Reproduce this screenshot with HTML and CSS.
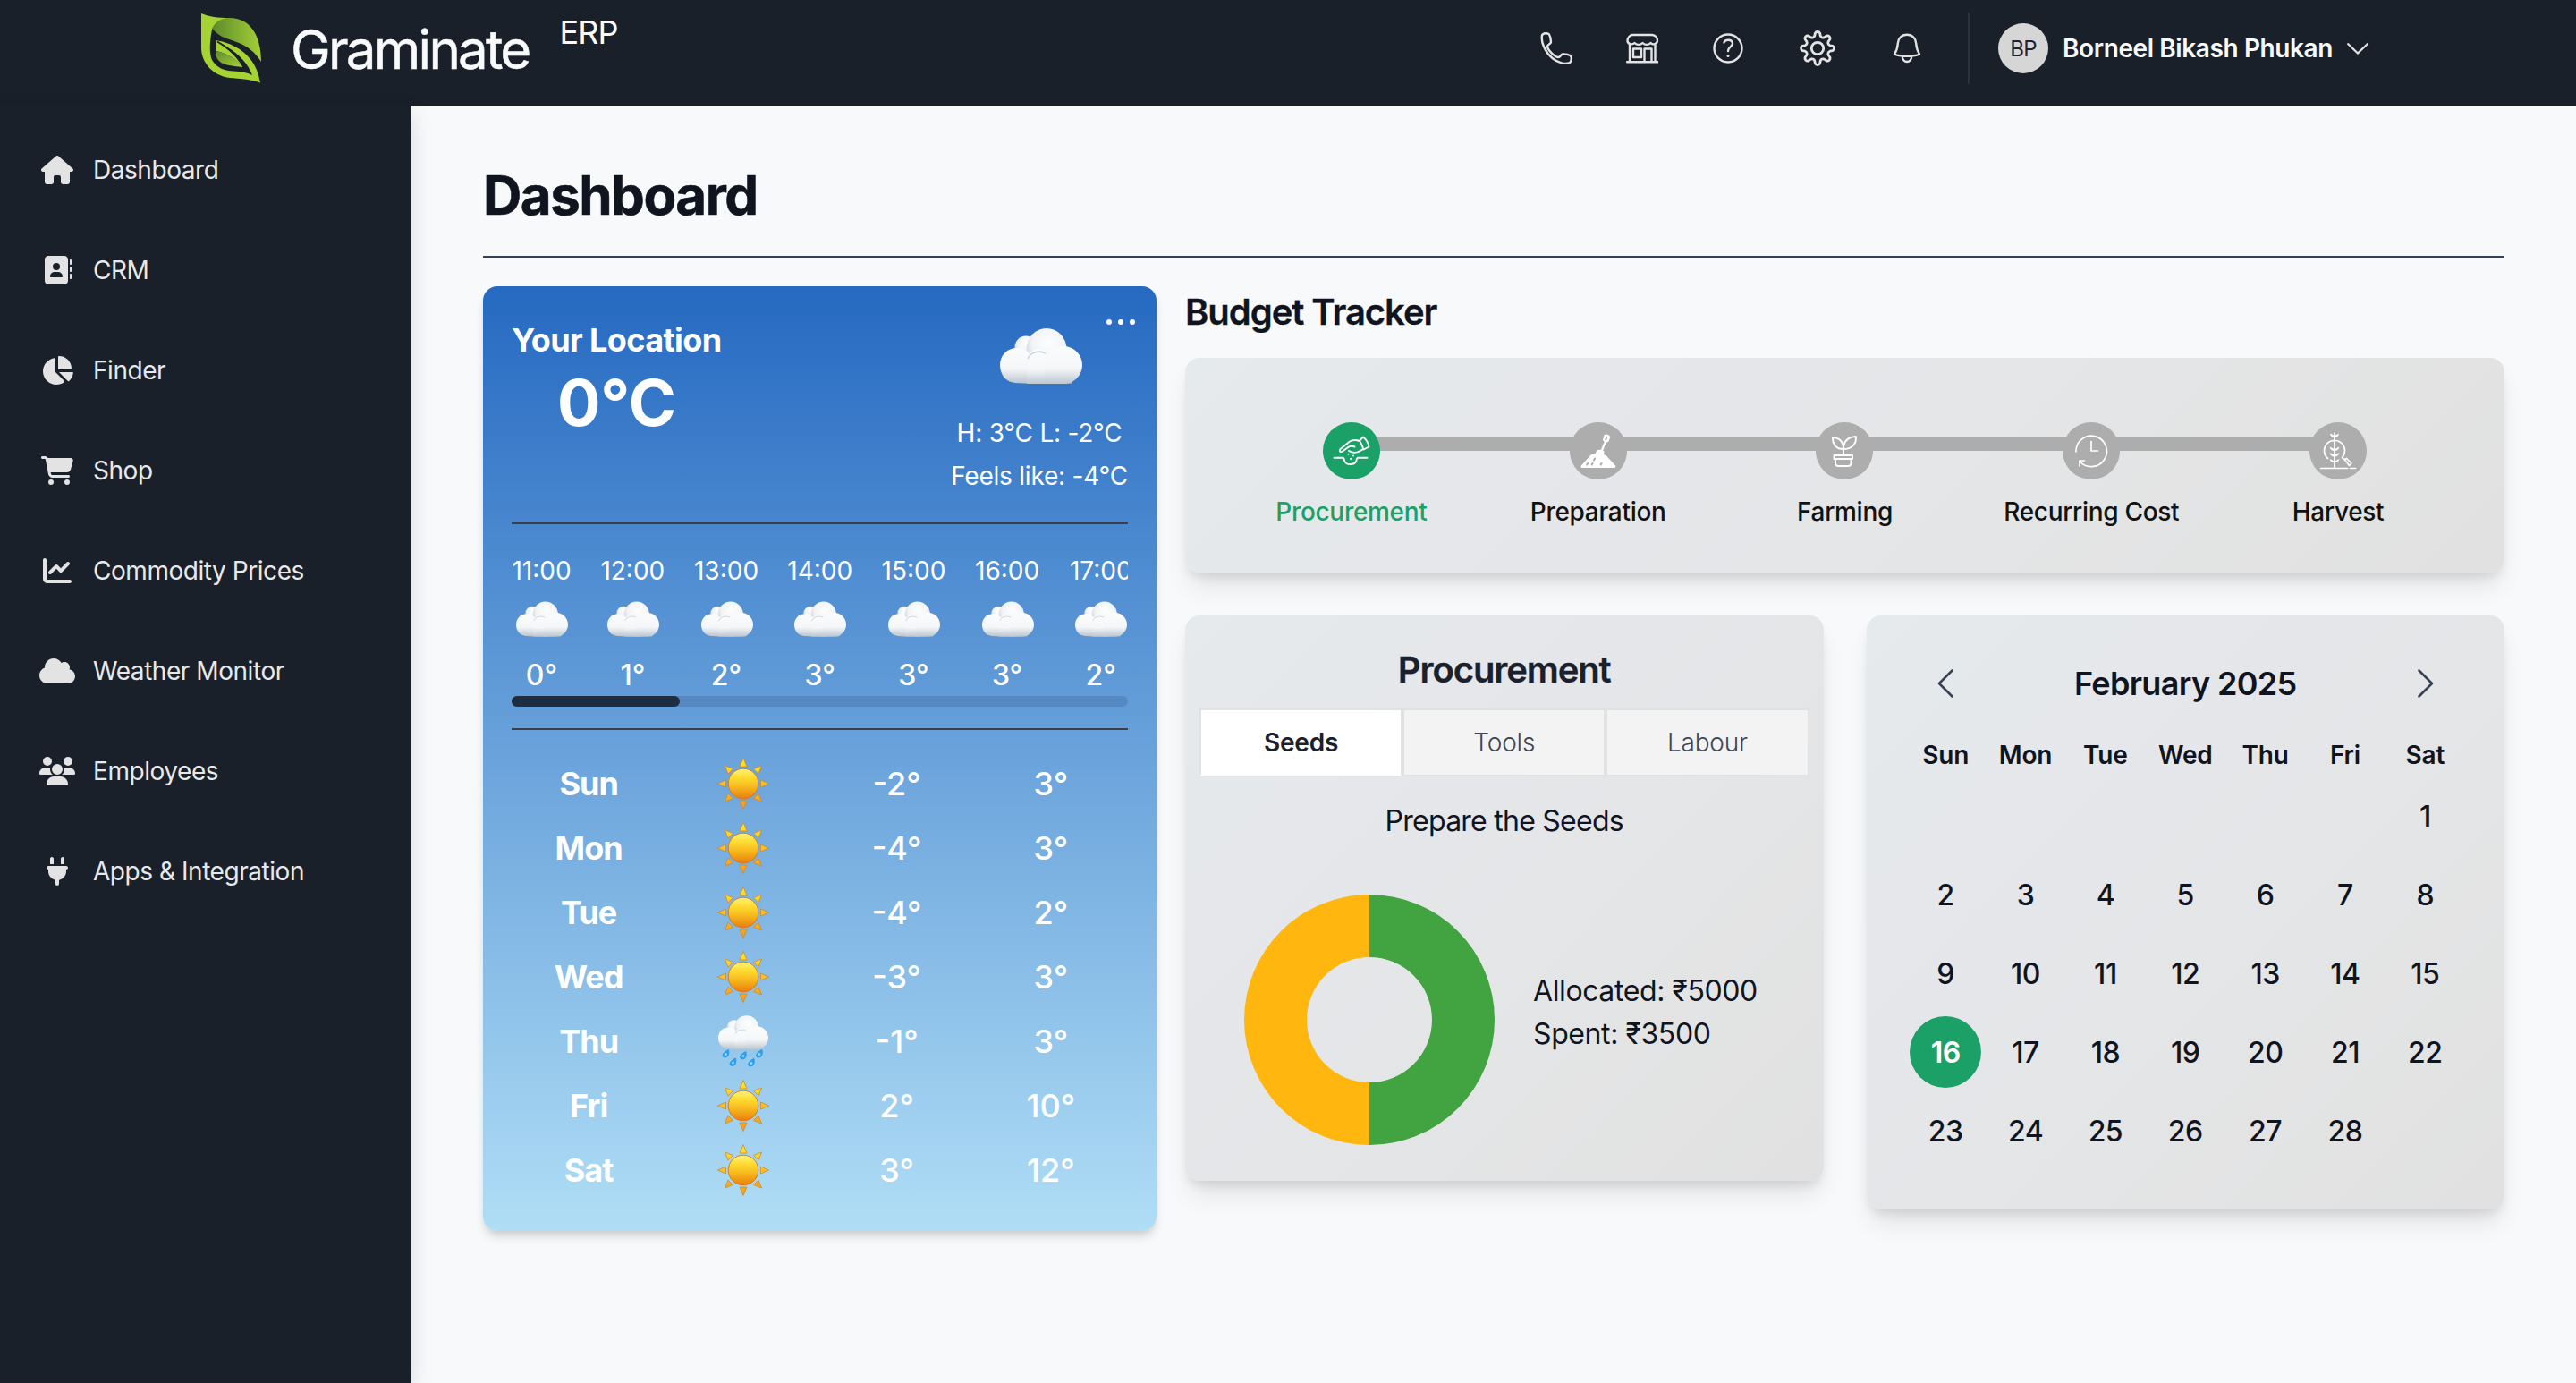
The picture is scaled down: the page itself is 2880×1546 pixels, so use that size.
FILE: index.html
```html
<!DOCTYPE html>
<html lang="en">
<head>
<meta charset="utf-8">
<title>Graminate ERP - Dashboard</title>
<link rel="stylesheet" href="styles.css">
</head>
<body>
<svg class="sprite" width="0" height="0" aria-hidden="true">
  <defs>
    <linearGradient id="puff" x1="0" y1="0" x2="0" y2="1"><stop offset="0" stop-color="#fbfcfc"/><stop offset=".6" stop-color="#f4f6f8"/><stop offset="1" stop-color="#bcc7d0"/></linearGradient>
    <radialGradient id="puffSide" cx=".55" cy=".35" r=".68"><stop offset="0" stop-color="#fdfefe"/><stop offset=".6" stop-color="#f1f3f6"/><stop offset="1" stop-color="#c6cfd8"/></radialGradient>
    <linearGradient id="sunDisc" x1="0" y1="0" x2="0" y2="1"><stop offset="0" stop-color="#fff08a"/><stop offset=".25" stop-color="#ffe135"/><stop offset=".6" stop-color="#f7b91e"/><stop offset="1" stop-color="#ea7d0e"/></linearGradient>
    <linearGradient id="rays" gradientUnits="userSpaceOnUse" x1="0" y1="0" x2="0" y2="58"><stop offset="0" stop-color="#ffe52c"/><stop offset="1" stop-color="#f79a1c"/></linearGradient>
    <linearGradient id="leafTop" x1="0" y1="0" x2="1" y2="0"><stop offset="0" stop-color="#5d8a2c"/><stop offset="1" stop-color="#a3d035"/></linearGradient>
    <linearGradient id="leafLow" x1="0" y1="0" x2="1" y2="1"><stop offset="0" stop-color="#5f8c2c"/><stop offset="1" stop-color="#a6d436"/></linearGradient>
    <symbol id="cloud" viewBox="0 0 92 62">
      <circle cx="29" cy="21" r="12.5" fill="url(#puffSide)"/>
      <ellipse cx="52" cy="23" rx="22.5" ry="23" fill="url(#puffSide)"/>
      <path d="M14 30H80V61.500Q46 63 16 61Z" fill="url(#puff)"/>
      <path d="M0 41C0 30 8 22 19 22S38 31 38 41V61H18C7 61 0 52 0 41Z" fill="url(#puff)"/>
      <path d="M30 38a13 13 0 0 1 26-3v27H30Z" fill="url(#puff)"/>
      <path d="M31 34a14 13 0 0 1 20-6" fill="none" stroke="#cbd3da" stroke-width="1.500"/>
      <path d="M50 40C50 28 59 20 71 20S92 30 92 41S83 62 72 62H50Z" fill="url(#puff)"/>
    </symbol>
    <symbol id="sun" viewBox="0 0 58 58">
      <g fill="url(#rays)" stroke="#c98a30" stroke-width=".8">
        <path d="M29 .5l4 9.500h-8zM29 57.500l4-9.500h-8zM.5 29l9-4v8zM57.500 29l-9-4v8z"/>
        <path d="M8.500 9l9 3.500-5.500 5.500zM49.500 9l-9 3.500 5.500 5.500zM8.500 49l9-3.500-5.500-5.500zM49.500 49l-9-3.500 5.500-5.500z"/>
      </g>
      <circle cx="29" cy="29" r="16.800" fill="url(#sunDisc)" stroke="#d9791c" stroke-width="1"/>
    </symbol>
    <symbol id="rain" viewBox="0 0 56 58">
      <use href="#cloud" x="0" y="0" width="56" height="38"/>
      <g fill="#2ea3f2" stroke="#1c86dc" stroke-width=".6">
        <path d="M11.500 38.500c1 5-.5 8.500-4 8.500-4 0-3.500-5.500 4-8.500z"/>
        <path d="M31 40.500c1 5-.5 8.500-4 8.500-4 0-3.500-5.500 4-8.500z"/>
        <path d="M49 38.500c1 5-.5 8.500-4 8.500-4 0-3.500-5.500 4-8.500z"/>
        <path d="M19.500 48c1 5-.5 8.500-4 8.500-4 0-3.500-5.500 4-8.500z"/>
        <path d="M40 48.500c1 5-.5 8.500-4 8.500-4 0-3.500-5.500 4-8.500z"/>
      </g>
      <g fill="#9ee4ff"><circle cx="8.500" cy="43.500" r="1.300"/><circle cx="28" cy="45.500" r="1.300"/><circle cx="46" cy="43.500" r="1.300"/><circle cx="16.500" cy="53" r="1.300"/><circle cx="37" cy="53.500" r="1.300"/></g>
    </symbol>
  </defs>
</svg>

<header class="topbar">
  <div class="brand">
    <svg class="logo" viewBox="0 0 68 78">
      <path fill="#a5d334" d="M0 0C9 4 20 5 32 5C22 7 14 11 12 18C9 34 9 45 12 52C17 61 26 64 36 64.500C45 65 51 66 57 69C52 54 38 41 19 32L16 30C42 34 62 50 66 77.500C54 73 42 73 32 72C14 70 0 56 0 38Z"/>
      <path fill="url(#leafTop)" d="M12.500 17C15 9 23 5 32 5C54 5 67 24 67 54C60 43 52 37 42 33C32 29 20 27 12.500 17Z"/>
      <path fill="#a5d334" d="M16 30C29 38 40 48 46.500 60C38 50 28 44 16 42Z"/>
      <path fill="url(#leafLow)" d="M16 42C28 44 38 50 46.500 60C30 58 16 58 16 42Z"/>
      <path fill="none" stroke="#1a2029" stroke-width="1.800" d="M18 31.500C31 39 41 48 49 62"/>
    </svg>
    <span class="brand-name">Graminate</span>
    <span class="brand-tag">ERP</span>
  </div>
  <div class="actions">
    <svg class="ico" viewBox="0 0 36 36"><path d="M2 3.500C3 .8 8.500 .5 10 2.500C11.500 5 12 9 12 11C11.500 13.500 8 13.500 8 16C8.500 20 16 27.500 20 28C22.500 28.500 22.500 25 25 24.500C27.500 24.300 31.500 25 33.500 26C35.500 27.500 35 32.500 33 34C28 36 20 34.500 13.500 29C5.500 22 .5 11 2 3.500Z"/></svg>
    <svg class="ico" viewBox="0 0 36 36"><path d="M7 3H29C33 3 35 6.500 35 9.500C35 13.500 29.500 14.500 27.500 12C25 14.500 21 14.500 18.500 12C16 14.500 12 14.500 9.500 12C7 14.500 1.500 13.500 1.500 9.500C1.500 6.500 4 3 7 3ZM4 13.500V33M32.500 13.500V33M1 33.300H35.500M8 18.500H17V28H8ZM20.500 33V18.500H28.500V33"/></svg>
    <svg class="ico" viewBox="0 0 36 36"><circle cx="18" cy="18" r="15.500"/><path d="M13.500 11.500C14.500 8 22.500 7.500 23 12.500C23.200 16 18 16.500 18 21"/><circle class="dot" cx="18" cy="26.500" r="1.500"/></svg>
    <svg class="ico ico-gear" viewBox="0 0 44 44"><circle cx="22" cy="22" r="6.700"/><path d="M18.800 8.100L19.300 5.200A3 3 0 0 1 24.700 5.200L25.200 8.100A3.200 3.200 0 0 0 29.500 9.900L32 8.100A3 3 0 0 1 35.800 12L34.100 14.500A3.200 3.200 0 0 0 35.900 18.800L38.800 19.300A3 3 0 0 1 38.800 24.700L35.900 25.200A3.200 3.200 0 0 0 34.100 29.500L35.800 32A3 3 0 0 1 32 35.900L29.500 34.100A3.200 3.200 0 0 0 25.200 35.900L24.700 38.800A3 3 0 0 1 19.300 38.800L18.800 35.900A3.200 3.200 0 0 0 14.500 34.100L12 35.900A3 3 0 0 1 8.200 32L9.900 29.500A3.200 3.200 0 0 0 8.100 25.200L5.200 24.700A3 3 0 0 1 5.200 19.300L8.100 18.800A3.200 3.200 0 0 0 9.900 14.500L8.200 12A3 3 0 0 1 12 8.100L14.500 9.900A3.200 3.200 0 0 0 18.800 8.100Z"/></svg>
    <svg class="ico" viewBox="0 0 36 36"><path d="M18 2.800C11.500 2.800 8 7.500 7.800 12.500C7.500 17.500 7 20 4 24.500C9 27.500 27 27.500 32 24.500C29 20 28.500 17.500 28.200 12.500C28 7.500 24.500 2.800 18 2.800ZM12.800 27C13 35 23 35 23.200 27"/></svg>
    <div class="account">
      <span class="avatar">BP</span>
      <span class="account-name">Borneel Bikash Phukan</span>
      <svg class="caret" viewBox="0 0 26 14"><path d="M1.500 1.500L13 12.500L24.500 1.500"/></svg>
    </div>
  </div>
</header>

<div class="shell">
  <nav class="sidebar">
    <a class="nav-item"><span class="nav-ico"><svg viewBox="0 0 576 512"><path d="M575.8 255.500c0 18-15 32.100-32 32.100h-32l.7 160.200c0 2.700-.2 5.400-.5 8.100V472c0 22.100-17.900 40-40 40H456c-1.100 0-2.200 0-3.300-.1c-1.400 .1-2.800 .1-4.200 .1H416 392c-22.100 0-40-17.900-40-40V448 384c0-17.700-14.300-32-32-32H256c-17.700 0-32 14.300-32 32v64 24c0 22.100-17.900 40-40 40H160 128.100c-1.500 0-3-.1-4.500-.2c-1.200 .1-2.400 .2-3.600 .2H104c-22.100 0-40-17.900-40-40V360c0-.9 0-1.900 .1-2.800V287.600H32c-18 0-32-14-32-32.100c0-9 3-17 10-24L266.400 8c7-7 15-8 22-8s15 2 21 7L564.800 231.500c8 7 12 15 11 24z"/></svg></span>Dashboard</a>
    <a class="nav-item"><span class="nav-ico"><svg viewBox="0 0 512 512"><path d="M96 0C60.700 0 32 28.700 32 64V448c0 35.300 28.700 64 64 64H384c35.300 0 64-28.700 64-64V64c0-35.300-28.700-64-64-64H96zM208 288h64c44.200 0 80 35.800 80 80c0 8.800-7.200 16-16 16H144c-8.800 0-16-7.200-16-16c0-44.200 35.800-80 80-80zm-32-96a64 64 0 1 1 128 0 64 64 0 1 1 -128 0zM512 80c0-8.800-7.200-16-16-16s-16 7.200-16 16v64c0 8.800 7.200 16 16 16s16-7.200 16-16V80zM496 192c-8.800 0-16 7.200-16 16v64c0 8.800 7.200 16 16 16s16-7.200 16-16V208c0-8.800-7.200-16-16-16zm16 144c0-8.800-7.200-16-16-16s-16 7.200-16 16v64c0 8.800 7.200 16 16 16s16-7.200 16-16V336z"/></svg></span>CRM</a>
    <a class="nav-item"><span class="nav-ico"><svg viewBox="0 0 576 512"><path d="M304 240V16.600c0-9 7-16.600 16-16.600C443.700 0 544 100.300 544 224c0 9-7.600 16-16.600 16H304zM32 272C32 150.700 122.100 50.300 239 34.300c9.200-1.300 17 6.100 17 15.400V288L412.500 444.500c6.700 6.700 6.200 17.700-1.500 23.100C371.800 495.600 323.800 512 272 512C139.500 512 32 404.600 32 272zm526.400 16c9.300 0 16.600 7.800 15.400 17c-7.700 55.900-34.600 105.600-73.900 142.300c-6 5.600-15.400 5.200-21.200-.7L320 288H558.400z"/></svg></span>Finder</a>
    <a class="nav-item"><span class="nav-ico"><svg viewBox="0 0 576 512"><path d="M0 24C0 10.700 10.700 0 24 0H69.500c22 0 41.500 12.800 50.600 32h411c26.300 0 45.500 25 38.600 50.400l-41 152.300c-8.500 31.400-37 53.300-69.500 53.300H170.700l5.400 28.500c2.200 11.300 12.100 19.500 23.600 19.500H488c13.300 0 24 10.700 24 24s-10.700 24-24 24H199.700c-34.600 0-64.300-24.600-70.700-58.500L77.400 54.500c-.7-3.800-4-6.500-7.900-6.500H24C10.700 48 0 37.300 0 24zM128 464a48 48 0 1 1 96 0 48 48 0 1 1 -96 0zm336-48a48 48 0 1 1 0 96 48 48 0 1 1 0-96z"/></svg></span>Shop</a>
    <a class="nav-item"><span class="nav-ico"><svg viewBox="0 0 512 512"><path d="M64 64c0-17.700-14.300-32-32-32S0 46.300 0 64V400c0 44.200 35.800 80 80 80H480c17.700 0 32-14.300 32-32s-14.300-32-32-32H80c-8.800 0-16-7.200-16-16V64zm406.600 86.600c12.500-12.500 12.500-32.800 0-45.300s-32.800-12.500-45.300 0L320 210.700l-57.400-57.400c-12.500-12.500-32.800-12.500-45.300 0l-112 112c-12.500 12.500-12.500 32.800 0 45.300s32.800 12.500 45.300 0L240 221.300l57.400 57.400c12.500 12.500 32.800 12.500 45.300 0l128-128z"/></svg></span>Commodity Prices</a>
    <a class="nav-item"><span class="nav-ico"><svg viewBox="0 0 640 512"><path d="M0 336c0 79.500 64.500 144 144 144H512c70.700 0 128-57.300 128-128c0-61.900-44-113.600-102.400-125.400c4.100-10.700 6.400-22.400 6.400-34.600c0-53-43-96-96-96c-19.700 0-38.100 6-53.300 16.200C367 64.200 315.300 32 256 32C167.600 32 96 103.600 96 192c0 2.700 .1 5.400 .2 8.100C40.200 219.800 0 273.200 0 336z"/></svg></span>Weather Monitor</a>
    <a class="nav-item"><span class="nav-ico"><svg viewBox="0 0 640 512"><path d="M144 0a80 80 0 1 1 0 160A80 80 0 1 1 144 0zM512 0a80 80 0 1 1 0 160A80 80 0 1 1 512 0zM0 298.700C0 239.800 47.800 192 106.700 192h42.700c15.900 0 31 3.500 44.600 9.700c-1.300 7.200-1.900 14.700-1.900 22.300c0 38.200 16.800 72.500 43.300 96c-.2 0-.4 0-.7 0H21.300C9.600 320 0 310.400 0 298.700zM405.300 320c-.2 0-.4 0-.7 0c26.600-23.500 43.300-57.800 43.300-96c0-7.600-.7-15-1.900-22.300c13.600-6.300 28.700-9.700 44.600-9.700h42.700C592.200 192 640 239.800 640 298.700c0 11.800-9.600 21.300-21.300 21.300H405.300zM224 224a96 96 0 1 1 192 0 96 96 0 1 1 -192 0zM128 485.300C128 411.700 187.700 352 261.300 352H378.700C452.300 352 512 411.700 512 485.300c0 14.700-11.900 26.700-26.700 26.700H154.700c-14.700 0-26.700-11.900-26.700-26.700z"/></svg></span>Employees</a>
    <a class="nav-item"><span class="nav-ico"><svg viewBox="0 0 384 512"><path d="M96 0C78.300 0 64 14.300 64 32v96h64V32c0-17.700-14.300-32-32-32zM288 0c-17.700 0-32 14.300-32 32v96h64V32c0-17.700-14.300-32-32-32zM32 160c-17.700 0-32 14.300-32 32s14.300 32 32 32v32c0 77.400 55 142 128 156.800V480c0 17.700 14.300 32 32 32s32-14.300 32-32V412.800C297 398 352 333.400 352 256V224c17.700 0 32-14.300 32-32s-14.300-32-32-32H32z"/></svg></span>Apps &amp; Integration</a>
  </nav>

  <main class="main">
    <h1 class="page-title">Dashboard</h1>
    <div class="columns">
      <section class="weather">
        <div class="now">
          <div class="now-left">
            <div class="place">Your Location</div>
            <div class="now-temp">0°C</div>
          </div>
          <div class="now-right">
            <svg class="now-cloud"><use href="#cloud"/></svg>
            <div>H: 3°C L: -2°C</div>
            <div>Feels like: -4°C</div>
          </div>
          <svg class="more" viewBox="0 0 32 6"><circle cx="3" cy="3" r="3"/><circle cx="16" cy="3" r="3"/><circle cx="29" cy="3" r="3"/></svg>
        </div>
        <div class="hours">
          <div class="hour"><span>11:00</span><svg><use href="#cloud"/></svg><b>0°</b></div>
          <div class="hour"><span>12:00</span><svg><use href="#cloud"/></svg><b>1°</b></div>
          <div class="hour"><span>13:00</span><svg><use href="#cloud"/></svg><b>2°</b></div>
          <div class="hour"><span>14:00</span><svg><use href="#cloud"/></svg><b>3°</b></div>
          <div class="hour"><span>15:00</span><svg><use href="#cloud"/></svg><b>3°</b></div>
          <div class="hour"><span>16:00</span><svg><use href="#cloud"/></svg><b>3°</b></div>
          <div class="hour"><span>17:00</span><svg><use href="#cloud"/></svg><b>2°</b></div>
        </div>
        <div class="track"><div class="thumb"></div></div>
        <div class="days">
          <div class="day"><b>Sun</b><svg><use href="#sun"/></svg><span>-2°</span><span>3°</span></div>
          <div class="day"><b>Mon</b><svg><use href="#sun"/></svg><span>-4°</span><span>3°</span></div>
          <div class="day"><b>Tue</b><svg><use href="#sun"/></svg><span>-4°</span><span>2°</span></div>
          <div class="day"><b>Wed</b><svg><use href="#sun"/></svg><span>-3°</span><span>3°</span></div>
          <div class="day"><b>Thu</b><svg><use href="#rain"/></svg><span>-1°</span><span>3°</span></div>
          <div class="day"><b>Fri</b><svg><use href="#sun"/></svg><span>2°</span><span>10°</span></div>
          <div class="day"><b>Sat</b><svg><use href="#sun"/></svg><span>3°</span><span>12°</span></div>
        </div>
      </section>

      <div class="right">
        <h2 class="section-title">Budget Tracker</h2>
        <section class="card stepper">
          <div class="step active">
            <div class="bubble"><svg viewBox="0 0 64 64"><path d="M41 20.500L45 16.500C48 19 51 24 51.500 27.500L45.500 30.500C44 26 43 23.500 41 20.500ZM41 21C37 19.500 33 19.700 30 21.500L19.500 30C18 32.500 19.500 34 22 32.500L27.500 28.500C30 26.500 33 26.500 35.500 27.500M29 32C33 34.500 39 34.500 45 30M12.500 39.700H22.500C24 39.700 23.500 42 24.500 44C26 48 35 48 37 44C38 42 37.500 39.700 39 39.700H49.500"/><circle class="solid" cx="28.500" cy="35.800" r="1"/><circle class="solid" cx="34" cy="37.500" r="1"/><circle class="solid" cx="31" cy="41" r="1"/></svg></div>
            <span>Procurement</span>
          </div>
          <div class="step">
            <div class="bubble"><svg viewBox="0 0 64 64"><path class="solid" d="M12.500 49L24 36L28 35.500L31 31L35 30.500L38.500 32.500L38 36L41 37.500L51.500 49Q51.500 51 49.500 51H14Q12 51 12.500 49ZM34.800 31L38.600 22L37 20L38.500 14Q42 12.500 45.500 16L43.500 21.500L40.600 23L37 32Z"/><path class="hole" d="M41.300 16.500L40.300 19.500M28 40.500l-1 2M20 46l-.8 1.500M25.500 46l-.8 1.500M35.500 46l-.8 1.500"/></svg></div>
            <span>Preparation</span>
          </div>
          <div class="step">
            <div class="bubble"><svg viewBox="0 0 64 64"><path d="M31 36V30M31 30C22 30 18.500 24 19 17C26 17.500 31 21.500 31 30ZM31 30C31 21 36 16.500 45 16C45.500 25 40 30 31 30ZM20.500 37H41V41H20.500ZM22 41V46C22 48 23.500 49 25.500 49H36C38 49 39.500 48 39.500 46V41"/></svg></div>
            <span>Farming</span>
          </div>
          <div class="step">
            <div class="bubble"><svg class="thin" viewBox="0 0 64 64"><path d="M15 33A17.200 17.200 0 1 1 19 43.500M24.500 43H19V49M32 21.500V32H39.500"/></svg></div>
            <span>Recurring Cost</span>
          </div>
          <div class="step">
            <div class="bubble"><svg class="thin" viewBox="0 0 64 64"><path d="M28 12V51.500M12.500 51.500H42.500M45.500 51.500H51.500M20.500 40.500A11.500 11.500 0 1 1 36.500 39.500L39 41.500M39.500 42L41.500 40.500L47 46L44.500 48.500Z"/><path class="solid" d="M23 12.500Q23.500 17 28 17Q32.500 17 33 12.500L28 15ZM22.500 27.500Q23.500 32 28 32Q32.500 32 33.500 27.500L28 30ZM22.500 34Q23.500 38.500 28 38.500Q32.500 38.500 33.500 34L28 36.500ZM22.500 41Q23.500 45 28 45Q32.500 45 33.500 41L28 43.500Z"/></svg></div>
            <span>Harvest</span>
          </div>
        </section>

        <div class="pair">
          <section class="card budget">
            <h3 class="budget-title">Procurement</h3>
            <div class="tabs">
              <div class="tab on">Seeds</div><div class="tab">Tools</div><div class="tab">Labour</div>
            </div>
            <p class="caption">Prepare the Seeds</p>
            <div class="breakdown">
              <svg class="donut" viewBox="0 0 280 280"><path fill="#42a341" d="M140 0A140 140 0 0 1 140 280V210A70 70 0 0 0 140 70Z"/><path fill="#ffb60f" d="M140 280A140 140 0 0 1 140 0V70A70 70 0 0 0 140 210Z"/></svg>
              <div class="amounts"><div>Allocated: ₹5000</div><div>Spent: ₹3500</div></div>
            </div>
          </section>

          <section class="card calendar">
            <div class="month">
              <svg viewBox="0 0 18 32"><path d="M16.500 1.500L2 16L16.500 30.500"/></svg>
              <h3>February 2025</h3>
              <svg viewBox="0 0 18 32"><path d="M1.500 1.500L16 16L1.500 30.500"/></svg>
            </div>
            <div class="week"><span>Sun</span><span>Mon</span><span>Tue</span><span>Wed</span><span>Thu</span><span>Fri</span><span>Sat</span></div>
            <div class="dates">
              <span class="first">1</span>
              <span>2</span><span>3</span><span>4</span><span>5</span><span>6</span><span>7</span><span>8</span>
              <span>9</span><span>10</span><span>11</span><span>12</span><span>13</span><span>14</span><span>15</span>
              <span class="today">16</span><span>17</span><span>18</span><span>19</span><span>20</span><span>21</span><span>22</span>
              <span>23</span><span>24</span><span>25</span><span>26</span><span>27</span><span>28</span>
            </div>
          </section>
        </div>
      </div>
    </div>
  </main>
</div>
</body>
</html>
```
FILE: styles.css
```css
* { box-sizing: border-box; margin: 0; padding: 0; }

body {
  width: 2880px;
  height: 1546px;
  overflow: hidden;
  background: #f8f9fb;
  color: #10141f;
  font-family: Inter, "Liberation Sans", sans-serif;
  font-size: 28px;
  display: flex;
  flex-direction: column;
}

svg { display: block; flex: none; }
.sprite { position: absolute; }

/* Top bar */
.topbar {
  height: 118px;
  flex: none;
  background: #1a2029;
  color: #f8fafc;
  display: flex;
  justify-content: space-between;
  padding: 0 231px 10px 225px;
}
.brand { display: flex; align-items: flex-start; }
.logo { width: 68px; height: 78px; margin-top: 15px; }
.brand-name { font-size: 60px; line-height: 72px; margin: 19px 0 0 32px; letter-spacing: -2.75px; -webkit-text-stroke: .5px currentColor; }
.brand-tag { font-size: 36px; line-height: 40px; margin: 16px 0 0 34px; letter-spacing: -.9px; }

.actions { display: flex; align-items: center; gap: 60px; }
.ico { width: 36px; height: 36px; fill: none; stroke: #e3e3e3; stroke-width: 2.4; stroke-linejoin: round; stroke-linecap: round; }
.ico-gear { width: 44px; height: 44px; stroke-width: 2.8; }
.ico .dot { fill: #e3e3e3; stroke: none; }
.account {
  display: flex;
  align-items: center;
  height: 80px;
  margin-left: -10px;
  padding-left: 32px;
  border-left: 2px solid #2b3341;
}
.avatar {
  width: 56px; height: 56px; border-radius: 50%;
  background: #d6d6d6; color: #1f2329;
  font-size: 24px;
  letter-spacing: -.8px;
  display: flex; align-items: center; justify-content: center;
}
.account-name { margin-left: 16px; font-weight: 600; letter-spacing: -.4px; }
.caret { width: 26px; height: 14px; margin-left: 15px; fill: none; stroke: #e3e3e3; stroke-width: 2.2; }

/* Shell */
.shell { flex: 1; display: flex; }
.sidebar {
  width: 460px;
  flex: none;
  background: #1a2029;
  padding-top: 16px;
  box-shadow: 0 8px 24px rgba(16, 20, 31, .12);
}
.nav-item {
  height: 112px;
  padding-left: 40px;
  display: flex;
  align-items: center;
  gap: 16px;
  color: #e7e9ec;
  letter-spacing: -.45px;
}
.nav-ico { width: 48px; display: flex; justify-content: center; }
.nav-ico svg { height: 32px; fill: #e3e3e3; }

.main { flex: 1; padding: 64px 80px 0; }
.page-title {
  height: 106px;
  border-bottom: 2px solid #374151;
  font-size: 60px;
  line-height: 72px;
  font-weight: 700;
  letter-spacing: -1.5px;
  -webkit-text-stroke: .6px currentColor;
}
.columns { display: flex; gap: 32px; margin-top: 32px; }

/* Weather */
.weather {
  width: 753px;
  height: 1056px;
  flex: none;
  padding: 32px;
  border-radius: 16px;
  background: linear-gradient(#2569c1, #b0def6);
  box-shadow: 0 8px 12px -2px rgba(0, 0, 0, .14), 0 4px 8px -4px rgba(0, 0, 0, .1);
  color: #fff;
}
.now {
  position: relative;
  height: 234px;
  display: flex;
  justify-content: space-between;
  border-bottom: 2px solid #3b3f4a;
}
.now-left { text-align: center; }
.place { font-size: 36px; line-height: 56px; font-weight: 700; letter-spacing: -.6px; }
.now-temp { font-size: 72px; line-height: 84px; font-weight: 700; letter-spacing: -.3px; }
.now-right { display: flex; flex-direction: column; align-items: center; line-height: 48px; letter-spacing: -.22px; }
.now-cloud { width: 92px; height: 62px; margin: 15px -3px 31px 0; }
.more { position: absolute; right: -8px; top: 5px; width: 32px; height: 6px; fill: #fff; }

.hours { display: flex; gap: 32px; height: 192px; padding-top: 32px; overflow: hidden; }
.hour { width: 72.7px; flex: none; display: flex; flex-direction: column; align-items: center; }
.hour:first-child { width: 67px; }
.hour span { line-height: 40px; }
.hour svg { width: 58px; height: 40px; margin: 14px -1px 20px 0; }
.hour b { font-size: 32px; line-height: 46px; font-weight: 500; }
.track { height: 12px; border-radius: 6px; background: #5689c3; }
.thumb { width: 188px; height: 12px; border-radius: 6px; background: #1f2d40; }
.days { margin-top: 24px; padding-top: 24px; border-top: 2px solid #3b3f4a; }
.day {
  height: 72px;
  display: grid;
  grid-template-columns: repeat(4, 1fr);
  align-items: center;
  justify-items: center;
  font-size: 36px;
}
.day b { font-weight: 700; letter-spacing: -1px; }
.day span { font-weight: 500; }
.day svg { width: 58px; height: 58px; margin-left: 2px; }

/* Budget tracker */
.right { flex: 1; }
.section-title { height: 80px; line-height: 58px; font-size: 40px; font-weight: 600; letter-spacing: -1.05px; -webkit-text-stroke: .3px currentColor; }
.card {
  border-radius: 16px;
  background: linear-gradient(135deg, #e5eaec, #e5e7eb 30%, #e4e5e6 60%, #e1e1e1);
  box-shadow: 0 20px 30px -6px rgba(0, 0, 0, .1), 0 8px 12px -4px rgba(0, 0, 0, .1);
}
.stepper { height: 240px; display: flex; padding: 72px 48px 0; color: #111; }
.step {
  flex: 1;
  display: flex;
  flex-direction: column;
  align-items: center;
  font-weight: 500;
}
.step + .step { background: linear-gradient(#adadad, #adadad) -138px 16px / 276px 16px no-repeat; }
.step:not(:last-child) { background: linear-gradient(#adadad, #adadad) 0 16px / 100% 16px no-repeat; }
.step:first-child { background-position: 138px 16px; }
.bubble { width: 64px; height: 64px; border-radius: 50%; background: #adadad; }
.bubble svg { width: 64px; height: 64px; fill: none; stroke: #fff; stroke-width: 1.9; stroke-linejoin: round; stroke-linecap: round; }
.bubble .thin { stroke-width: 1.7; }
.bubble .solid { fill: #fff; stroke: none; }
.bubble .hole { stroke: #adadad; stroke-width: 2; }
.step span { margin-top: 16px; line-height: 40px; letter-spacing: -.3px; }
.step.active { color: #1ba068; }
.active .bubble { background: #1ba068; }

.pair { display: grid; grid-template-columns: 1fr 1fr; gap: 48px; margin-top: 48px; align-items: start; }

.budget { height: 632px; padding: 33px 16px 0; }
.budget-title { text-align: center; font-size: 40px; line-height: 56px; font-weight: 600; color: #1a212c; letter-spacing: -1.1px; -webkit-text-stroke: .3px currentColor; }
.tabs { display: grid; grid-template-columns: repeat(3, 1fr); margin-top: 15px; height: 76px; }
.tab {
  display: flex; align-items: center; justify-content: center;
  border: 2px solid #e1e1e1;
  background: #f3f3f3;
  color: #3c4656;
  font-weight: 300;
  letter-spacing: -.2px;
}
.tab.on { background: #fff; border-bottom-color: #fff; color: #1a212c; font-weight: 600; }
.caption { margin-top: 26px; line-height: 48px; font-size: 32px; text-align: center; letter-spacing: -.75px; }
.breakdown { display: flex; align-items: center; gap: 43px; margin-top: 58px; padding-left: 50px; }
.donut { width: 280px; height: 280px; }
.amounts { font-size: 32px; line-height: 48px; margin-top: -17px; letter-spacing: -.4px; }

.calendar { height: 664px; padding: 48px 48px 0; }
.month { height: 56px; display: flex; align-items: center; justify-content: space-between; padding: 0 31px; }
.month h3 { font-size: 36px; font-weight: 600; letter-spacing: -.65px; }
.month svg { width: 18px; height: 32px; fill: none; stroke: #374151; stroke-width: 2.6; stroke-linecap: round; stroke-linejoin: round; }
.week, .dates { display: grid; grid-template-columns: repeat(7, 1fr); column-gap: 8px; text-align: center; }
.week { margin-top: 32px; height: 48px; line-height: 40px; font-weight: 600; letter-spacing: -.2px; }
.dates { row-gap: 8px; justify-items: center; font-size: 32px; font-weight: 500; line-height: 82px; letter-spacing: -.5px; }
.dates span { width: 80px; height: 80px; border-radius: 50%; }
.first { grid-column: 7; }
.today { background: #1ba068; color: #fff; font-weight: 600; }
```
